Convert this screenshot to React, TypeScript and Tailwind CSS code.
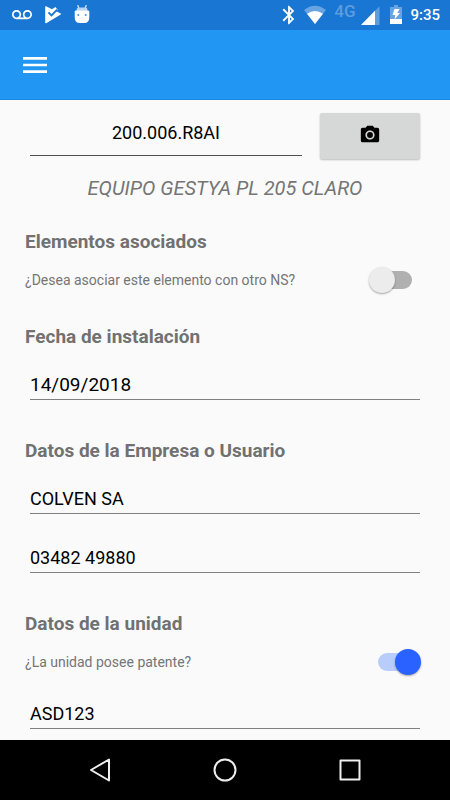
import { MdBluetooth, MdMenu, MdPhotoCamera, MdVoicemail } from "react-icons/md";

const inputStyle =
  "block w-full min-w-0 rounded-none border-b bg-transparent text-black outline-none";

function PlayCheckIcon() {
  return (
    <svg width="18" height="20" viewBox="0 0 18 20" aria-hidden="true">
      <path
        d="M1.2 1.8Q1.2.9 2.1 1.3L8 4.2 11.4 2l2.3 2.7-1.6 1.6 4.6 2.3q.9.5 0 1L2.2 18.2q-1 .5-1-.6z"
        fill="#fff"
      />
      <path d="M4.5 7.4l3 3 5.6-5.7" fill="none" stroke="#1976d2" strokeWidth="1.9" />
    </svg>
  );
}

function AndroidHeadIcon() {
  return (
    <svg width="16" height="20" viewBox="0 0 16 20" aria-hidden="true">
      <path d="M3.7 0l1.1 3M12.3 0l-1.1 3" stroke="#d5e5f7" strokeWidth="1.3" />
      <path d="M2.6 6V4.4q0-1.8 1.8-1.8h7.2q1.8 0 1.8 1.8V6z" fill="#b9d4f1" />
      <path d="M.7 6.2Q1.2 5.4 2 5.4h12q.8 0 1.3.8V12q0 6-5 6H5.7q-5 0-5-6z" fill="#fff" />
      <circle cx="4.3" cy="10" r="1" fill="#4d93dc" />
      <circle cx="11.7" cy="10" r="1" fill="#4d93dc" />
    </svg>
  );
}

function WifiIcon() {
  return (
    <svg width="22" height="20" viewBox="0 0 22 20" aria-hidden="true">
      <path d="M0 5Q11-3.6 22 5L11 19z" fill="#68a4e2" />
      <path d="M3 8.8Q11 3 19 8.8L11 19z" fill="#fff" />
    </svg>
  );
}

function SignalIcon() {
  return (
    <svg width="19" height="20" viewBox="0 0 19 20" aria-hidden="true">
      <path d="M0 20L18.5 1.2V20z" fill="#5e9ddf" />
      <path d="M0 20L14 5.8V20z" fill="#fff" />
    </svg>
  );
}

function BatteryIcon() {
  return (
    <svg width="12" height="20" viewBox="0 0 12 20" aria-hidden="true">
      <path d="M4 0h4v2h4v12H0V2h4z" fill="#68a4e2" />
      <path d="M0 14h12v5H0z" fill="#fff" />
      <path d="M4.5 4h5L7.3 8H10l-5.5 6.500L5.300 10H2.500z" fill="#fff" />
    </svg>
  );
}

function Question({ id, text, on }: { id: string; text: string; on: boolean }) {
  return (
    <div className="mt-[13px] flex items-center justify-between pr-1">
      <label htmlFor={id} className="text-sm leading-[26px] text-[#757575]">
        {text}
      </label>
      <input
        id={id}
        type="checkbox"
        role="switch"
        defaultChecked={on}
        className="relative h-[26px] w-[52px] shrink-0 appearance-none before:absolute before:inset-x-[9px] before:inset-y-1 before:rounded-full before:bg-[#b0b0b0] after:absolute after:left-0 after:top-0 after:size-[26px] after:rounded-full after:bg-[#ececec] after:shadow-[0_1px_2px_rgba(0,0,0,0.35)] checked:before:bg-[#b9cdfd] checked:after:left-auto checked:after:right-0 checked:after:bg-[#2962ff]"
      />
    </div>
  );
}

function Heading({ children }: { children: string }) {
  return <h2 className="text-[19px] leading-6 font-bold text-[#717171]">{children}</h2>;
}

function Field({ label, value, size = "text-lg" }: { label: string; value: string; size?: string }) {
  return (
    <div className="px-[5px]">
      <input
        aria-label={label}
        defaultValue={value}
        className={`${inputStyle} ${size} h-[35px] border-[#808080] pt-1`}
      />
    </div>
  );
}

export default function App() {
  return (
    <div className="flex min-h-screen flex-col bg-[#fafafa] font-['Roboto',sans-serif]">
      <div className="flex h-[30px] items-center justify-between bg-[#1976d2] pr-[10px] pl-3 text-white">
        <div className="flex items-center gap-3">
          <MdVoicemail size={20} />
          <PlayCheckIcon />
          <AndroidHeadIcon />
        </div>
        <div className="flex items-center gap-2">
          <div className="flex items-center gap-1">
            <MdBluetooth size={22} />
            <WifiIcon />
          </div>
          <div className="flex items-center gap-1.5">
            <span className="pb-2 text-[17px] leading-4 font-medium text-[#5e9ddf]">4G</span>
            <SignalIcon />
          </div>
          <span className="pl-0.5">
            <BatteryIcon />
          </span>
          <time className="text-[15px] leading-5 font-medium">9:35</time>
        </div>
      </div>

      <header className="flex h-[70px] items-center border-b border-[#1c86e0] bg-[#2196f3] px-[19px]">
        <button type="button" aria-label="Menú" className="text-white">
          <MdMenu size={32} />
        </button>
      </header>

      <main className="flex-1 px-[25px] pt-[13px] pb-[10px]">
        <div className="flex items-start gap-[18px] px-[5px]">
          <input
            aria-label="Número de serie"
            defaultValue="200.006.R8AI"
            className={`${inputStyle} h-[43px] flex-1 border-[#505050] pb-1 text-center text-lg`}
          />
          <button
            type="button"
            aria-label="Tomar foto"
            className="flex h-[46px] w-[100px] shrink-0 items-center justify-center rounded-xs bg-[#d6d7d7] pb-0.5 text-black shadow-[0_1px_2px_rgba(0,0,0,0.25)]"
          >
            <MdPhotoCamera size={22} />
          </button>
        </div>
        <p className="mt-[17px] text-center text-xl leading-6 text-[#757575] italic">
          EQUIPO GESTYA PL 205 CLARO
        </p>

        <section className="mt-[30px]">
          <Heading>Elementos asociados</Heading>
          <Question id="asociar" text="¿Desea asociar este elemento con otro NS?" on={false} />
        </section>

        <section className="mt-8 flex flex-col gap-4">
          <Heading>Fecha de instalación</Heading>
          <Field label="Fecha de instalación" value="14/09/2018" size="text-[19px]" />
        </section>

        <section className="mt-[39px] flex flex-col gap-4">
          <Heading>Datos de la Empresa o Usuario</Heading>
          <div className="flex flex-col gap-6">
            <Field label="Empresa" value="COLVEN SA" />
            <Field label="Teléfono" value="03482 49880" />
          </div>
        </section>

        <section className="mt-[39px] flex flex-col">
          <Heading>Datos de la unidad</Heading>
          <Question id="patente" text="¿La unidad posee patente?" on />
          <div className="mt-[19px]">
            <Field label="Patente" value="ASD123" />
          </div>
        </section>
      </main>

      <nav className="grid h-[60px] grid-cols-3 items-center justify-items-center bg-black px-[38px]">
        <button type="button" aria-label="Atrás">
          <svg width="24" height="24" viewBox="0 0 24 24" fill="none" stroke="#eee" strokeWidth="2" strokeLinejoin="round">
            <path d="M21 1.500v21L3 12z" />
          </svg>
        </button>
        <button type="button" aria-label="Inicio">
          <svg width="24" height="24" viewBox="0 0 24 24" fill="none" stroke="#eee" strokeWidth="2">
            <circle cx="12" cy="12" r="10.500" />
          </svg>
        </button>
        <button type="button" aria-label="Recientes">
          <svg width="24" height="24" viewBox="0 0 24 24" fill="none" stroke="#eee" strokeWidth="2" strokeLinejoin="round">
            <path d="M2.500 2.500h19v19h-19z" />
          </svg>
        </button>
      </nav>
    </div>
  );
}
